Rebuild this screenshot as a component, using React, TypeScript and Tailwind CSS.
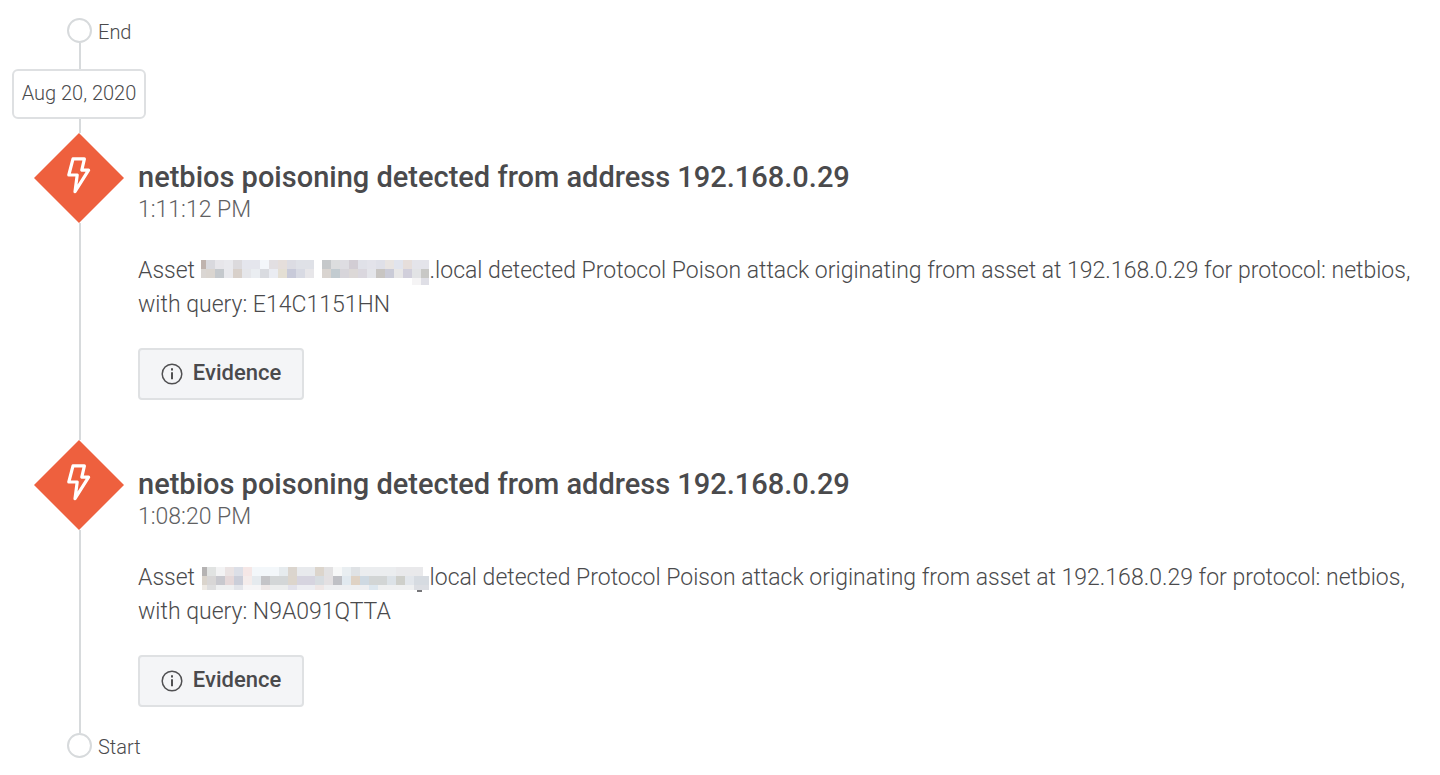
type Cell = [number, number, number, number, string];

const firstMask: Cell[] = [
  [0, 0, 5, 9, "#bfb3ae"], [5, 0, 9, 9, "#d9d9de"], [14, 0, 9, 9, "#e7e6ea"], [23, 0, 9, 9, "#e9e9ed"], [32, 0, 9, 9, "#dcdadd"], [41, 0, 18, 9, "#e5e6ed"], [59, 0, 9, 9, "#f3f6fa"], [68, 0, 9, 9, "#e2dfe2"], [77, 0, 9, 9, "#e5dedb"], [86, 0, 9, 9, "#dcdce3"], [95, 0, 18, 9, "#dfe1e7"],
  [0, 9, 5, 9, "#dad6d3"], [5, 9, 9, 9, "#dad5d0"], [14, 9, 9, 9, "#c5c9cd"], [23, 9, 9, 9, "#e9e9ed"], [32, 9, 9, 9, "#d8d0ca"], [41, 9, 9, 9, "#e5e6ea"], [50, 9, 9, 9, "#eaedf1"], [59, 9, 9, 9, "#f3f6fa"], [59, 9, 9, 9, "#d9dbe0"], [68, 9, 9, 9, "#eaecf2"], [77, 9, 9, 9, "#e4dfd4"], [86, 9, 9, 9, "#c8cad9"], [95, 9, 9, 9, "#d8dae3"], [104, 9, 9, 9, "#e7e6e9"],
  [121, 0, 9, 9, "#c5c8ca"], [130, 0, 9, 9, "#dcddde"], [139, 0, 9, 9, "#dedde2"], [148, 0, 9, 9, "#d2cdd4"], [157, 0, 9, 9, "#e0e1e8"], [166, 0, 9, 9, "#e3e3ea"], [175, 0, 9, 9, "#dfe0e8"], [184, 0, 9, 9, "#e8e4e2"], [193, 0, 9, 9, "#e1e4ed"], [202, 0, 9, 9, "#e6dedb"], [211, 0, 17, 9, "#e4e4ea"],
  [121, 9, 9, 9, "#d9d4d0"], [130, 9, 9, 9, "#c2cbd0"], [139, 9, 9, 9, "#d7d5da"], [148, 9, 9, 9, "#dcd8d7"], [157, 9, 9, 9, "#dad7de"], [166, 9, 9, 9, "#e4e5ea"], [175, 9, 9, 9, "#c8c5c2"], [184, 9, 9, 9, "#cacbd7"], [193, 9, 9, 9, "#e8e7e7"], [202, 9, 9, 9, "#d1cfdb"], [211, 9, 9, 9, "#e2e3e5"], [220, 9, 8, 9, "#c8c8c6"],
  [211, 18, 9, 7, "#f5f4f5"], [220, 18, 8, 7, "#dfdfe6"],
];

const secondMask: Cell[] = [
  [1, 0, 5, 9, "#b5b3b3"], [6, 0, 9, 9, "#e1e3e2"], [15, 0, 9, 9, "#f3f3f4"], [24, 0, 9, 9, "#eae3e3"], [33, 0, 9, 9, "#dcdfe7"], [42, 0, 9, 9, "#f5e7e6"], [51, 0, 27, 9, "#f3f7fa"], [78, 0, 9, 9, "#e6ebee"], [87, 0, 9, 9, "#dbd5ce"], [96, 0, 18, 9, "#e8eaed"], [114, 0, 9, 9, "#dcd5cc"], [123, 0, 9, 9, "#e2e1e2"], [132, 0, 9, 9, "#f7f8f8"], [141, 0, 9, 9, "#e9eef1"], [150, 0, 9, 9, "#dfe2e5"], [159, 0, 36, 9, "#ebedef"], [195, 0, 27, 9, "#e9e9eb"],
  [1, 9, 5, 9, "#dad4cc"], [6, 9, 9, 9, "#d8d6d6"], [15, 9, 9, 9, "#c8c8ce"], [24, 9, 9, 9, "#e5d8d9"], [33, 9, 9, 9, "#cbced9"], [42, 9, 9, 9, "#f4eceb"], [51, 9, 9, 9, "#e5eaee"], [60, 9, 9, 9, "#c4c4c7"], [69, 9, 18, 9, "#d3d6d7"], [87, 9, 9, 9, "#dcd5cc"], [96, 9, 18, 9, "#d6d4df"], [114, 9, 9, 9, "#d7dce0"], [123, 9, 9, 9, "#e3e0e2"], [132, 9, 9, 9, "#bfc0c5"], [141, 9, 9, 9, "#e1e9ef"], [150, 9, 9, 9, "#dfd2c4"], [159, 9, 9, 9, "#ced9e2"], [168, 9, 18, 9, "#d2d5d5"], [186, 9, 9, 9, "#dce2e7"], [195, 9, 9, 9, "#cecfca"], [204, 9, 9, 9, "#e2e6eb"], [213, 9, 15, 9, "#d6dbe1"],
  [1, 18, 5, 5, "#eeeae5"], [6, 18, 9, 5, "#dededf"], [15, 18, 18, 5, "#eff0f1"], [33, 18, 9, 5, "#e3e5ea"], [42, 18, 18, 5, "#f6f5f6"], [60, 18, 9, 5, "#eee8e7"], [69, 18, 18, 5, "#eceded"], [87, 18, 9, 5, "#e2e2eb"], [96, 18, 18, 5, "#edeef2"], [114, 18, 9, 5, "#efe7e6"], [123, 18, 45, 5, "#eeeff1"], [168, 18, 9, 5, "#dde7ef"], [177, 18, 36, 5, "#eff0f1"], [213, 18, 15, 5, "#dcdee3"],
  [216, 23, 5, 2, "#77777a"],
];

const events = [
  { time: "1:11:12 PM", mask: firstMask, host: ".local", query: "E14C1151HN" },
  { time: "1:08:20 PM", mask: secondMask, host: "local", query: "N9A091QTTA" },
];

function Redacted({ cells }: { cells: Cell[] }) {
  return (
    <svg width="229" height="25" viewBox="0 0 229 25" className="-my-1 inline-block align-[-3px]" shapeRendering="crispEdges" role="img" aria-label="Redacted asset name">
      {cells.map(([x, y, w, h, fill], index) => (
        <rect key={index} x={x} y={y} width={w} height={h} fill={fill} />
      ))}
    </svg>
  );
}

function Diamond() {
  return (
    <svg width="90" height="90" viewBox="0 0 90 90" className="block shrink-0" aria-hidden="true">
      <path d="M45 0 90 45 45 90 0 45Z" fill="#ee603e" />
      <path d="M39 25.9H50.4L47.8 37.2H54.6L41 58.6L43.2 42H34.8Z" fill="none" stroke="#fff" strokeWidth="3.2" strokeLinejoin="round" />
    </svg>
  );
}

function InfoIcon() {
  return (
    <svg width="22" height="22" viewBox="0 0 22 22" className="mt-1 block" aria-hidden="true">
      <circle cx="11" cy="11" r="9.8" fill="none" stroke="#505052" strokeWidth="1.5" />
      <path d="M11 9.2V16.2" stroke="#505052" strokeWidth="2" />
      <path d="M11 5.2V7.4" stroke="#505052" strokeWidth="2" />
    </svg>
  );
}

function Endpoint({ label }: { label: string }) {
  return (
    <div className="flex h-[25px] items-center gap-1.5 pl-[67px]">
      <span className="size-[25px] shrink-0 rounded-full border-2 border-[#d7dadc]" />
      <span className="pt-0.5 text-[20px] leading-6">{label}</span>
    </div>
  );
}

export default function App() {
  return (
    <main className="min-h-screen bg-white pt-[18px] pr-5 pb-4 font-['Roboto',sans-serif] font-light text-[#4a4a4c]">
      <Endpoint label="End" />
      <div className="ml-[79px] h-[26px] w-0.5 bg-[#d7dadc]" />
      <time dateTime="2020-08-20" className="ml-3 flex h-[50px] w-[134px] items-center justify-center rounded-md border-2 border-[#dee0e2] pb-0.5 text-[20px] leading-6 whitespace-nowrap">
        Aug 20, 2020
      </time>
      <div className="ml-[79px] h-3.5 w-0.5 bg-[#d7dadc]" />
      <ol>
        {events.map((event) => (
          <li key={event.time} className="group flex gap-3.5 pl-[34px]">
            <div className="flex flex-col">
              <Diamond />
              <div className="ml-[45px] w-0.5 flex-1 bg-[#d7dadc]" />
            </div>
            <article className="min-w-0 flex-1 pt-7 pb-10 group-last:pb-[26px]">
              <h2 className="text-[29px] leading-8 font-[480]">netbios poisoning detected from address 192.168.0.29</h2>
              <p className="pt-px text-[23px] leading-8 text-[#606062]">{event.time}</p>
              <p className="mt-7 text-[23px] leading-[34px]">
                <span>Asset </span>
                <Redacted cells={event.mask} />
                {`${event.host} detected Protocol Poison attack originating from asset at 192.168.0.29 for protocol: netbios, with query: ${event.query}`}
              </p>
              <button type="button" className="mt-[26px] flex h-[52px] w-[166px] items-center justify-center gap-2.5 rounded border-2 border-[#dfe1e3] bg-[#f4f5f7] pb-1 text-[22px] font-[480]">
                <InfoIcon />
                Evidence
              </button>
            </article>
          </li>
        ))}
      </ol>
      <Endpoint label="Start" />
    </main>
  );
}
